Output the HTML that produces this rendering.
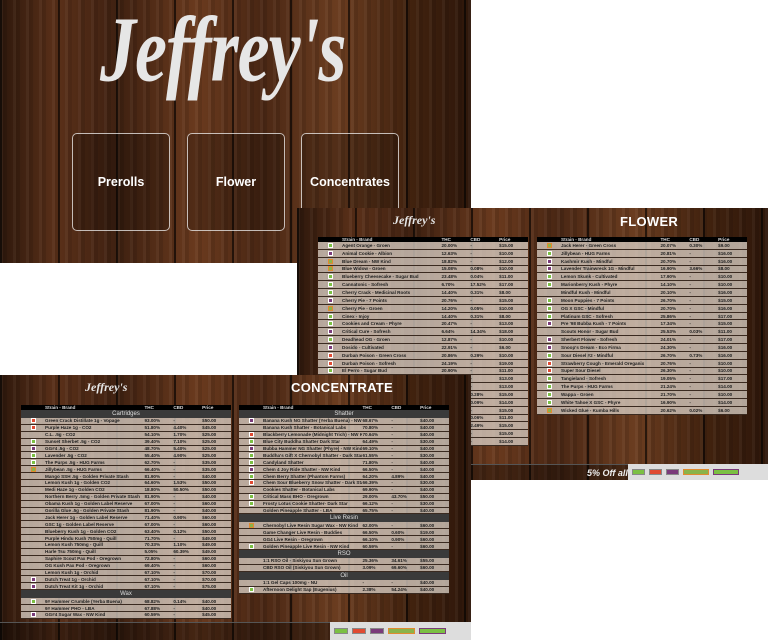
<!DOCTYPE html><html><head><meta charset="utf-8"><style>
*{margin:0;padding:0;box-sizing:border-box}
body{width:768px;height:640px;background:#fff;position:relative;overflow:hidden;font-family:"Liberation Sans",sans-serif}
.wood{position:absolute;overflow:hidden;background:
repeating-linear-gradient(90deg,rgba(0,0,0,.6) 0 2px,transparent 2px 58px),
repeating-linear-gradient(90deg,rgba(255,255,255,.04) 0 3px,rgba(0,0,0,.1) 3px 7px,transparent 7px 13px),
linear-gradient(90deg,#2e180c,#5a3019 12%,#3f2111 25%,#6a3a1e 42%,#4a2714 55%,#6b3d20 72%,#43230f 86%,#2e170a)}
.logo{position:absolute;color:#e6e6e6;font-family:"Liberation Serif",serif;font-style:italic;font-weight:bold;white-space:nowrap;letter-spacing:-1px}
.btn{position:absolute;top:133px;width:98px;height:98px;border:1px solid rgba(255,255,255,.7);border-radius:5px;background:rgba(0,0,0,.22);color:#fff;font-weight:bold;font-size:12.5px;display:flex;align-items:center;justify-content:center}
.ttl{position:absolute;color:#fff;font-weight:bold;font-size:13px;letter-spacing:.3px}
.tb{position:absolute;font-size:4.6px;color:#222;font-weight:bold}
.hd{background:#000;color:#ddd;height:5px;display:flex;align-items:center}
.r{display:flex;align-items:center;background:rgba(215,205,195,.78);border-bottom:1px solid #3a2a20;white-space:nowrap;overflow:hidden}
.f .r{height:7.85px}
.c .r{height:6.9px}
.sec{background:#3a3a3a;color:#ddd;text-align:center;font-size:6px;font-weight:normal;height:8px;line-height:8px}
.r i,.hd i{display:inline-block;width:5px;height:5px;margin-left:10px;margin-right:9px;flex:none}
.hd i{visibility:hidden}
.g{background:#7bc043;border:1px solid #fff}.s{background:#e04a32;border:1px solid #fff}.p{background:#7a3a7a;border:1px solid #fff}.o{background:#8ab34a;border:1px solid #e08a30}.n{visibility:hidden}
.r b,.hd b{width:100px;font-weight:bold;overflow:hidden}
.r span,.hd span{width:29px}
.foot{position:absolute;background:rgba(0,0,0,.35);border-top:1px solid #555}
.leg{position:absolute;background:#ddd;display:flex;align-items:center;gap:4px;padding:0 4px}
.leg u{display:inline-block;height:6px;border:1px solid #888;text-decoration:none}
</style></head><body>

<div class="wood" style="left:0;top:0;width:471px;height:263px">
<div class="logo" style="left:100px;top:-4px;font-size:72px;transform:scaleY(1.3);transform-origin:top left">Jeffrey's</div>
<div class="btn" style="left:72px">Prerolls</div>
<div class="btn" style="left:187px">Flower</div>
<div class="btn" style="left:301px">Concentrates</div>
</div>

<div class="wood" style="left:297px;top:208px;width:471px;height:272px">
<div class="logo" style="left:96px;top:5px;font-size:12px;letter-spacing:0">Jeffrey's</div>
<div class="ttl" style="left:323px;top:6px">FLOWER</div>
<div class="tb f" style="left:21px;top:29px;width:210px">
<div class="hd"><i></i><b>Strain - Brand</b><span>THC</span><span>CBD</span><span>Price</span></div>
<div class="r"><i class="g"></i><b>Agent Orange - Groen</b><span>20.00%</span><span>-</span><span>$15.00</span></div>
<div class="r"><i class="p"></i><b>Animal Cookie - Albion</b><span>12.63%</span><span>-</span><span>$10.00</span></div>
<div class="r"><i class="o"></i><b>Blue Dream - NW Kind</b><span>18.82%</span><span>-</span><span>$12.00</span></div>
<div class="r"><i class="o"></i><b>Blue Widow - Groen</b><span>15.08%</span><span>0.08%</span><span>$10.00</span></div>
<div class="r"><i class="g"></i><b>Blueberry Cheesecake - Sugar Bud</b><span>23.48%</span><span>0.04%</span><span>$11.00</span></div>
<div class="r"><i class="g"></i><b>Cannatonic - Sofresh</b><span>6.70%</span><span>17.52%</span><span>$17.00</span></div>
<div class="r"><i class="g"></i><b>Cherry Crack - Medicinal Roots</b><span>14.40%</span><span>0.31%</span><span>$8.00</span></div>
<div class="r"><i class="p"></i><b>Cherry Pie - 7 Points</b><span>20.76%</span><span>-</span><span>$15.00</span></div>
<div class="r"><i class="o"></i><b>Cherry Pie - Groen</b><span>14.20%</span><span>0.05%</span><span>$10.00</span></div>
<div class="r"><i class="g"></i><b>Cinex - Injoy</b><span>14.40%</span><span>0.31%</span><span>$8.00</span></div>
<div class="r"><i class="g"></i><b>Cookies and Cream - Phyre</b><span>20.47%</span><span>-</span><span>$13.00</span></div>
<div class="r"><i class="p"></i><b>Critical Cure - Sofresh</b><span>6.64%</span><span>14.34%</span><span>$18.00</span></div>
<div class="r"><i class="g"></i><b>Deadhead OG - Groen</b><span>12.87%</span><span>-</span><span>$10.00</span></div>
<div class="r"><i class="p"></i><b>Dosido - Cultivated</b><span>22.91%</span><span>-</span><span>$6.00</span></div>
<div class="r"><i class="s"></i><b>Durban Poison - Green Cross</b><span>20.86%</span><span>0.29%</span><span>$10.00</span></div>
<div class="r"><i class="s"></i><b>Durban Poison - Sofresh</b><span>24.19%</span><span>-</span><span>$19.00</span></div>
<div class="r"><i class="g"></i><b>El Perro - Sugar Bud</b><span>20.90%</span><span>-</span><span>$11.00</span></div>
<div class="r"><i class="g"></i><b>Gelato - Groen</b><span>19.40%</span><span>-</span><span>$13.00</span></div>
<div class="r"><i class="g"></i><b>Gorilla Glue - Phyre</b><span>22.10%</span><span>-</span><span>$13.00</span></div>
<div class="r"><i class="o"></i><b>Harlequin - Sofresh</b><span>7.20%</span><span>0.28%</span><span>$15.00</span></div>
<div class="r"><i class="g"></i><b>Hawaiian - Groen</b><span>18.40%</span><span>0.09%</span><span>$14.00</span></div>
<div class="r"><i class="g"></i><b>Headband - Injoy</b><span>19.80%</span><span>-</span><span>$15.00</span></div>
<div class="r"><i class="p"></i><b>Hindu Kush - Albion</b><span>17.90%</span><span>0.06%</span><span>$11.00</span></div>
<div class="r"><i class="g"></i><b>Harle Tsu - Sofresh</b><span>5.30%</span><span>2.49%</span><span>$15.00</span></div>
<div class="r"><i class="g"></i><b>Island Sweet Skunk</b><span>18.10%</span><span>-</span><span>$15.00</span></div>
<div class="r"><i class="g"></i><b>Jack Frost - Groen</b><span>19.20%</span><span>-</span><span>$14.00</span></div>
</div>
<div class="tb f" style="left:240px;top:29px;width:210px">
<div class="hd"><i></i><b>Strain - Brand</b><span>THC</span><span>CBD</span><span>Price</span></div>
<div class="r"><i class="o"></i><b>Jack Herer - Green Cross</b><span>20.07%</span><span>0.30%</span><span>$9.00</span></div>
<div class="r"><i class="g"></i><b>Jillybean - HUG Farms</b><span>20.81%</span><span>-</span><span>$16.00</span></div>
<div class="r"><i class="p"></i><b>Kashmir Kush - Mindful</b><span>20.70%</span><span>-</span><span>$16.00</span></div>
<div class="r"><i class="p"></i><b>Lavender Trainwreck 1G - Mindful</b><span>16.90%</span><span>3.66%</span><span>$8.00</span></div>
<div class="r"><i class="g"></i><b>Lemon Skunk - Cultivated</b><span>17.90%</span><span>-</span><span>$10.00</span></div>
<div class="r"><i class="g"></i><b>Marionberry Kush - Phyre</b><span>14.10%</span><span>-</span><span>$10.00</span></div>
<div class="r"><i class="n"></i><b>Mindful Kush - Mindful</b><span>20.10%</span><span>-</span><span>$16.00</span></div>
<div class="r"><i class="g"></i><b>Moon Puppies - 7 Points</b><span>26.70%</span><span>-</span><span>$15.00</span></div>
<div class="r"><i class="g"></i><b>OG X GSC - Mindful</b><span>20.70%</span><span>-</span><span>$16.00</span></div>
<div class="r"><i class="g"></i><b>Platinum GSC - Sofresh</b><span>25.86%</span><span>-</span><span>$17.00</span></div>
<div class="r"><i class="p"></i><b>Pre '98 Bubba Kush - 7 Points</b><span>17.34%</span><span>-</span><span>$15.00</span></div>
<div class="r"><i class="n"></i><b>Scouts Honor - Sugar Bud</b><span>25.53%</span><span>0.03%</span><span>$11.00</span></div>
<div class="r"><i class="p"></i><b>Sherbert Flower - Sofresh</b><span>24.01%</span><span>-</span><span>$17.00</span></div>
<div class="r"><i class="p"></i><b>Snoop's Dream - Eco Firma</b><span>24.30%</span><span>-</span><span>$16.00</span></div>
<div class="r"><i class="g"></i><b>Sour Diesel #2 - Mindful</b><span>26.70%</span><span>0.73%</span><span>$16.00</span></div>
<div class="r"><i class="s"></i><b>Strawberry Cough - Emerald Oreganix</b><span>20.76%</span><span>-</span><span>$10.00</span></div>
<div class="r"><i class="s"></i><b>Super Sour Diesel</b><span>26.30%</span><span>-</span><span>$10.00</span></div>
<div class="r"><i class="g"></i><b>Tangieland - Sofresh</b><span>19.05%</span><span>-</span><span>$17.00</span></div>
<div class="r"><i class="g"></i><b>The Purps - HUG Farms</b><span>21.24%</span><span>-</span><span>$14.00</span></div>
<div class="r"><i class="g"></i><b>Wappa - Groen</b><span>21.70%</span><span>-</span><span>$10.00</span></div>
<div class="r"><i class="g"></i><b>White Tahoe X GSC - Phyre</b><span>16.90%</span><span>-</span><span>$14.00</span></div>
<div class="r"><i class="o"></i><b>Wicked Glue - Kumba Hills</b><span>20.62%</span><span>0.02%</span><span>$6.00</span></div>
</div>
<div class="foot" style="left:0;top:256px;width:471px;height:16px"><div style="position:absolute;left:290px;top:3px;color:#eee;font-size:9px;font-style:italic;font-weight:bold">5% Off all ounces of</div></div>
<div class="leg" style="left:331px;top:256px;width:140px;height:16px"><u style="width:13px;background:#7bc043"></u><u style="width:13px;background:#e04a32"></u><u style="width:13px;background:#7a3a7a"></u><u style="width:26px;background:#8ab34a;border-color:#e08a30"></u><u style="width:26px;background:#7bc043;border-color:#7a3a7a"></u></div>
</div>

<div class="wood" style="left:0;top:375px;width:471px;height:265px">
<div class="logo" style="left:85px;top:5px;font-size:12px;letter-spacing:0">Jeffrey's</div>
<div class="ttl" style="left:291px;top:5px">CONCENTRATE</div>
<div class="tb c" style="left:21px;top:30px;width:210px">
<div class="hd"><i></i><b>Strain - Brand</b><span>THC</span><span>CBD</span><span>Price</span></div>
<div class="sec">Cartridges</div>
<div class="r"><i class="s"></i><b>Green Crack Distillate 1g - Vopage</b><span>93.00%</span><span>-</span><span>$50.00</span></div>
<div class="r"><i class="s"></i><b>Purple Haze 1g - CO2</b><span>51.80%</span><span>4.40%</span><span>$45.00</span></div>
<div class="r"><i class="n"></i><b>C.L. .5g - CO2</b><span>54.10%</span><span>1.70%</span><span>$25.00</span></div>
<div class="r"><i class="g"></i><b>Sunset Sherbet .5g - CO2</b><span>39.40%</span><span>7.10%</span><span>$25.00</span></div>
<div class="r"><i class="p"></i><b>GG#4 .5g - CO2</b><span>48.70%</span><span>5.40%</span><span>$25.00</span></div>
<div class="r"><i class="g"></i><b>Lavender .5g - CO2</b><span>55.40%</span><span>4.90%</span><span>$25.00</span></div>
<div class="r"><i class="g"></i><b>The Purps .5g - HUG Farms</b><span>62.70%</span><span>-</span><span>$35.00</span></div>
<div class="r"><i class="o"></i><b>Jillybean .5g - HUG Farms</b><span>66.40%</span><span>-</span><span>$35.00</span></div>
<div class="r"><i class="n"></i><b>Mango SSH .5g - Golden Private Stash</b><span>81.90%</span><span>-</span><span>$40.00</span></div>
<div class="r"><i class="n"></i><b>Lemon Kush 1g - Golden CO2</b><span>64.60%</span><span>1.53%</span><span>$50.00</span></div>
<div class="r"><i class="n"></i><b>Medi Haze 1g - Golden CO2</b><span>18.80%</span><span>50.50%</span><span>$50.00</span></div>
<div class="r"><i class="n"></i><b>Northern Berry .5mg - Golden Private Stash</b><span>81.90%</span><span>-</span><span>$40.00</span></div>
<div class="r"><i class="n"></i><b>Obama Kush 1g - Golden Label Reserve</b><span>67.00%</span><span>-</span><span>$60.00</span></div>
<div class="r"><i class="n"></i><b>Gorilla Glue .5g - Golden Private Stash</b><span>81.90%</span><span>-</span><span>$40.00</span></div>
<div class="r"><i class="n"></i><b>Jack Herer 1g - Golden Label Reserve</b><span>71.40%</span><span>0.90%</span><span>$60.00</span></div>
<div class="r"><i class="n"></i><b>GSC 1g - Golden Label Reserve</b><span>67.00%</span><span>-</span><span>$60.00</span></div>
<div class="r"><i class="n"></i><b>Blueberry Kush 1g - Golden CO2</b><span>63.40%</span><span>0.12%</span><span>$50.00</span></div>
<div class="r"><i class="n"></i><b>Purple Hindu Kush 750mg - Quill</b><span>71.70%</span><span>-</span><span>$49.00</span></div>
<div class="r"><i class="n"></i><b>Lemon Kush 750mg - Quill</b><span>70.33%</span><span>1.10%</span><span>$49.00</span></div>
<div class="r"><i class="n"></i><b>Harle Tsu 750mg - Quill</b><span>5.05%</span><span>60.39%</span><span>$49.00</span></div>
<div class="r"><i class="n"></i><b>Saphire Scout Pax Pod - Oregrown</b><span>72.80%</span><span>-</span><span>$60.00</span></div>
<div class="r"><i class="n"></i><b>OG Kush Pax Pod - Oregrown</b><span>69.40%</span><span>-</span><span>$60.00</span></div>
<div class="r"><i class="n"></i><b>Lemon Kush 1g - Orchid</b><span>67.10%</span><span>-</span><span>$70.00</span></div>
<div class="r"><i class="p"></i><b>Dutch Treat 1g - Orchid</b><span>67.10%</span><span>-</span><span>$70.00</span></div>
<div class="r"><i class="p"></i><b>Dutch Treat Kit 1g - Orchid</b><span>67.10%</span><span>-</span><span>$75.00</span></div>
<div class="sec">Wax</div>
<div class="r"><i class="g"></i><b>9# Hammer Crumble (Yerba Buena)</b><span>68.82%</span><span>0.14%</span><span>$40.00</span></div>
<div class="r"><i class="n"></i><b>9# Hammer PHO - LBA</b><span>67.88%</span><span>-</span><span>$40.00</span></div>
<div class="r"><i class="p"></i><b>GG#4 Sugar Wax - NW Kind</b><span>60.59%</span><span>-</span><span>$45.00</span></div>
</div>
<div class="tb c" style="left:239px;top:30px;width:210px">
<div class="hd"><i></i><b>Strain - Brand</b><span>THC</span><span>CBD</span><span>Price</span></div>
<div class="sec">Shatter</div>
<div class="r"><i class="p"></i><b>Banana Kush NG Shatter (Yerba Buena) - NW Kind</b><span>68.67%</span><span>-</span><span>$40.00</span></div>
<div class="r"><i class="n"></i><b>Banana Kush Shatter - Botanical Labs</b><span>70.80%</span><span>-</span><span>$40.00</span></div>
<div class="r"><i class="s"></i><b>Blackberry Lemonade (Midnight Trich) - NW Kind</b><span>70.64%</span><span>-</span><span>$40.00</span></div>
<div class="r"><i class="g"></i><b>Blue City Buddha Shatter Dark Star</b><span>64.49%</span><span>-</span><span>$30.00</span></div>
<div class="r"><i class="p"></i><b>Bubba Hammer NG Shatter (Phyre) - NW Kind</b><span>69.10%</span><span>-</span><span>$40.00</span></div>
<div class="r"><i class="g"></i><b>Buddha's Gift X Chernobyl Shatter - Dark Star</b><span>61.55%</span><span>-</span><span>$30.00</span></div>
<div class="r"><i class="g"></i><b>Candyland Shatter</b><span>71.80%</span><span>-</span><span>$40.00</span></div>
<div class="r"><i class="p"></i><b>Chem 4 Joy Ride Shatter - NW Kind</b><span>66.50%</span><span>-</span><span>$40.00</span></div>
<div class="r"><i class="g"></i><b>Chem Berry Shatter (Phantom Farms)</b><span>64.20%</span><span>4.89%</span><span>$40.00</span></div>
<div class="r"><i class="s"></i><b>Chem Sour Blueberry Snow Shatter - Dark Star</b><span>66.39%</span><span>-</span><span>$30.00</span></div>
<div class="r"><i class="n"></i><b>Cookies Shatter - Botanical Labs</b><span>69.90%</span><span>-</span><span>$40.00</span></div>
<div class="r"><i class="g"></i><b>Critical Mass BHO - Oregrown</b><span>29.00%</span><span>43.70%</span><span>$50.00</span></div>
<div class="r"><i class="g"></i><b>Frosty Lotus Cookie Shatter- Dark Star</b><span>66.12%</span><span>-</span><span>$30.00</span></div>
<div class="r"><i class="n"></i><b>Golden Pineapple Shatter - LBA</b><span>65.75%</span><span>-</span><span>$40.00</span></div>
<div class="sec">Live Resin</div>
<div class="r"><i class="o"></i><b>Chernobyl Live Resin Sugar Wax - NW Kind</b><span>62.00%</span><span>-</span><span>$60.00</span></div>
<div class="r"><i class="n"></i><b>Game Changer Live Resin - Buddies</b><span>66.50%</span><span>0.60%</span><span>$19.00</span></div>
<div class="r"><i class="n"></i><b>GG4 Live Resin - Oregrown</b><span>66.10%</span><span>0.90%</span><span>$60.00</span></div>
<div class="r"><i class="g"></i><b>Golden Pineapple Live Resin - NW Kind</b><span>60.59%</span><span>-</span><span>$60.00</span></div>
<div class="sec">RSO</div>
<div class="r"><i class="n"></i><b>1:1 RSO Oil - Siskiyou Sun Grown</b><span>25.36%</span><span>34.61%</span><span>$55.00</span></div>
<div class="r"><i class="n"></i><b>CBD RSO Oil (Siskiyou Sun Grown)</b><span>3.09%</span><span>69.60%</span><span>$60.00</span></div>
<div class="sec">Oil</div>
<div class="r"><i class="n"></i><b>1:1 Gel Caps 100mg - NU</b><span>-</span><span>-</span><span>$40.00</span></div>
<div class="r"><i class="g"></i><b>Afternoon Delight Sap (Eugenius)</b><span>2.38%</span><span>54.24%</span><span>$40.00</span></div>
</div>
<div class="foot" style="left:0;top:247px;width:471px;height:18px"></div>
<div class="leg" style="left:330px;top:247px;width:141px;height:18px"><u style="width:14px;background:#7bc043"></u><u style="width:14px;background:#e04a32"></u><u style="width:14px;background:#7a3a7a"></u><u style="width:27px;background:#8ab34a;border-color:#e08a30"></u><u style="width:27px;background:#7bc043;border-color:#7a3a7a"></u></div>
</div>
</body></html>
